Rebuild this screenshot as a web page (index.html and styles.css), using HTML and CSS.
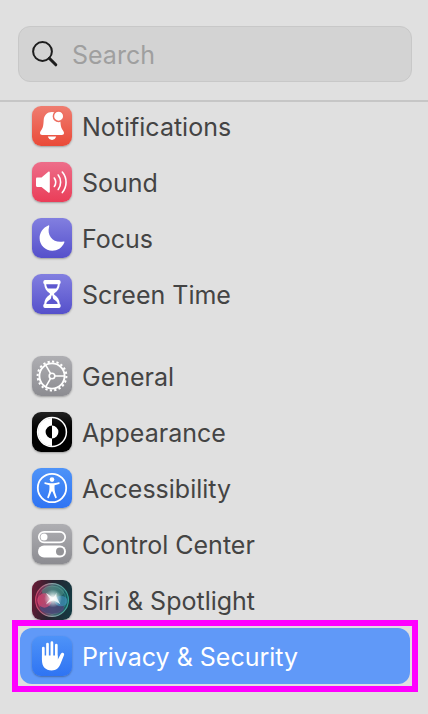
FILE: index.html
```html
<!DOCTYPE html>
<html lang="en">
<head>
<meta charset="utf-8">
<meta name="viewport" content="width=device-width, initial-scale=1">
<title>System Settings</title>
<link rel="stylesheet" href="styles.css">
</head>
<body>
<header class="header">
  <label class="search">
    <svg class="search-icon" viewBox="0 0 26 26" aria-hidden="true"><circle cx="10.5" cy="10.5" r="9.4"/><path class="handle" d="M17.3 17.3 23.8 23.8"/></svg>
    <input class="search-input" type="search" placeholder="Search" aria-label="Search">
  </label>
</header>
<nav class="sidebar" aria-label="Settings">
  <ul class="group">
    <li><a class="item" href="#"><span class="icon red">
      <svg viewBox="0 0 40 40"><path fill="#fff" d="M20 5.900c5 0 7.900 3.400 8.300 8 .3 4.200.4 6.900 1.700 9 .8 1.300 2 2.400 2 4.100 0 1.200-.8 1.900-2.200 1.900H10.200C8.800 28.900 8 28.200 8 27c0-1.700 1.200-2.800 2-4.100 1.300-2.100 1.400-4.800 1.700-9 .4-4.600 3.300-8 8.300-8z"/><circle cx="26.600" cy="10.200" r="5.200" fill="#fff" stroke="#ed6e60" stroke-width="1.500"/><path fill="#fff" d="M15.800 30.600h8.400c-.6 2-2.100 3.300-4.200 3.300s-3.600-1.300-4.200-3.300z"/></svg>
    </span><span class="label">Notifications</span></a></li>
    <li><a class="item" href="#"><span class="icon pink">
      <svg viewBox="0 0 40 40"><path fill="#fff" d="M5 15.500h4.500l6.800-5.800c.7-.6 1.500-.3 1.500.7v19.300c0 1-.8 1.300-1.500.7L9.500 25H5.500c-1 0-1.500-.6-1.500-1.500v-6.500c0-.9.3-1.500 1-1.500z"/><path class="line" stroke-width="1.600" d="M22.300 16c1.700 2.500 1.700 6 0 8.500M26.200 13c3.200 4.100 3.200 10.300 0 14.500M30.300 10c5 5.900 5 14.600 0 20.600"/></svg>
    </span><span class="label">Sound</span></a></li>
    <li><a class="item" href="#"><span class="icon purple">
      <svg viewBox="0 0 40 40"><path fill="#fff" d="M16.300 7.400c.6-.3 1.100.1.900.8-2.900 9.700 4.600 17.400 14.300 15.300.8-.2 1.200.3.800 1C30 30 25.500 32.700 20.300 32.700 13.300 32.700 7.600 27.300 7.600 20c0-5.400 3.500-10.600 8.700-12.600z"/></svg>
    </span><span class="label">Focus</span></a></li>
    <li><a class="item" href="#"><span class="icon purple">
      <svg viewBox="0 0 40 40"><path fill="#fff" d="M13 6h14c2 0 2.200 3.700.8 4.100-.3 4.500-2.200 7-5.400 9.100-.5.400-.5 1.200 0 1.600 3.200 2.100 5.100 4.800 5.400 9.200 1.400.4 1.200 4-.8 4H13c-2 0-2.200-3.600-.8-4 .3-4.400 2.200-7.100 5.400-9.200.5-.4.5-1.200 0-1.600-3.200-2.100-5.100-4.600-5.400-9.100C10.800 9.700 11 6 13 6z"/><path fill="#5d58cf" d="M14.200 10.200h11.600c-.2 1.700-.7 3-1.600 4.200h-8.400c-.9-1.200-1.400-2.500-1.600-4.200zM19.500 21.500h1l.4 2.400c.2.900.7 1.300 1.500 1.900 1.800 1.300 3 2.200 3.300 4.100H14.300c.3-1.900 1.500-2.800 3.300-4.100.8-.6 1.300-1 1.500-1.900z"/></svg>
    </span><span class="label">Screen Time</span></a></li>
  </ul>
  <ul class="group">
    <li><a class="item" href="#"><span class="icon gray">
      <svg viewBox="0 0 40 40"><g class="line"><circle cx="20" cy="20" r="12.600" stroke-width="1.900"/><circle cx="20" cy="20" r="2.800" stroke-width="1.600"/><path stroke-width="1.600" d="M23 20h9.500M18.500 17.400 13.700 9.100M18.500 22.600l-4.800 8.300"/><circle class="teeth" cx="20" cy="20" r="14.400" pathLength="40"/></g></svg>
    </span><span class="label">General</span></a></li>
    <li><a class="item" href="#"><span class="icon black">
      <svg viewBox="0 0 40 40"><circle cx="20" cy="20" r="14.400" fill="none" stroke="#fff" stroke-width="1.500"/><path fill="#fff" d="M20 6a14 14 0 0 0 0 28v-7.600a6.400 6.400 0 0 1 0-12.800zM20 13.600a6.400 6.400 0 0 1 0 12.800z"/></svg>
    </span><span class="label">Appearance</span></a></li>
    <li><a class="item" href="#"><span class="icon blue">
      <svg viewBox="0 0 40 40"><circle class="line" cx="20" cy="20" r="14.200" stroke-width="1.800"/><circle cx="20" cy="11.600" r="2.300" fill="#fff"/><path fill="#fff" d="M13.300 14.300c2.300.8 4.400 1 6.700 1s4.400-.2 6.700-1c1.100-.3 1.400 1.200.4 1.600l-4.500 1.400c-.3 3.400.1 6.100 1.200 9.300l.9 2.500c.4 1.100-1.100 1.700-1.600.6L20.500 23.500h-1L16.900 29.700c-.5 1.100-2 .5-1.600-.6l.9-2.500c1.100-3.200 1.500-5.900 1.200-9.300l-4.500-1.400c-1-.4-.7-1.900.4-1.600z"/></svg>
    </span><span class="label">Accessibility</span></a></li>
    <li><a class="item" href="#"><span class="icon gray">
      <svg viewBox="0 0 40 40"><rect class="line" x="6.800" y="7.800" width="26.400" height="10.600" rx="5.300" stroke-width="1.700"/><circle cx="12" cy="13.100" r="3.500" fill="#fff"/><rect x="6" y="21.500" width="28" height="12" rx="6" fill="#fff"/><circle cx="28" cy="27.500" r="4" fill="#949498"/></svg>
    </span><span class="label">Control Center</span></a></li>
    <li><a class="item" href="#"><span class="icon siri">
      <svg viewBox="0 0 40 40"><defs><radialGradient id="glow"><stop offset="0" stop-color="#fff"/><stop offset=".3" stop-color="#fff" stop-opacity=".75"/><stop offset="1" stop-color="#dff" stop-opacity="0"/></radialGradient><linearGradient id="ring"><stop offset="0" stop-color="#c84466"/><stop offset=".5" stop-color="#8da0a5"/><stop offset="1" stop-color="#37a49b"/></linearGradient><linearGradient id="orb"><stop offset="0" stop-color="#8b1747"/><stop offset=".5" stop-color="#4a6470"/><stop offset="1" stop-color="#105c60"/></linearGradient></defs><circle cx="20" cy="20" r="16.400" fill="url(#orb)" stroke="url(#ring)" stroke-width="1.200"/><circle cx="20" cy="20" r="14" fill="none" stroke="url(#ring)" stroke-width=".8" opacity=".7"/><ellipse cx="21" cy="12" rx="11" ry="6.500" fill="#4d9488" opacity=".5"/><ellipse cx="20" cy="28" rx="12" ry="6" fill="#4a4577" opacity=".8"/><circle cx="12.500" cy="20.500" r="7.200" fill="#d94a75" opacity=".7"/><ellipse cx="29" cy="21" rx="6.500" ry="5.200" fill="#3f8fb8" opacity=".7"/><path fill="#fff" opacity=".8" d="M14 13c3 2 5 3 6.500 4.500 2-1 3-2.500 4-5-.3 3-.2 4.500 1 6.500l3 5.500c-3-2-5-3.500-7-4-3 .5-4.500 1.500-7.500 4 1.500-3 3-4 4-5.500-1-2-2.500-3.500-4-6z"/><circle cx="21" cy="18.500" r="9" fill="url(#glow)"/></svg>
    </span><span class="label">Siri &amp; Spotlight</span></a></li>
    <li><a class="item selected" href="#" aria-current="page"><span class="icon blue">
      <svg viewBox="0 0 40 40"><g fill="none" stroke="#fff" stroke-linecap="round" stroke-width="2.700"><path d="M11.300 12V24M15.500 8.100v14M19.900 6.700V22M24.300 9.200v14"/></g><path fill="#fff" d="M9.950 19.500h15.700v4.200l2.700-5c.8-1.500 1.600-2 2.700-1.800 1.300.3 1.300 1.400.8 2.700l-3.300 8.200c-1.600 4.300-4.400 6.600-8.900 6.600-6.200 0-9.700-3.800-9.700-10.400z"/></svg>
    </span><span class="label">Privacy &amp; Security</span></a></li>
  </ul>
</nav>
</body>
</html>
```

FILE: styles.css
```css
* {
  box-sizing: border-box;
}

body {
  margin: 0;
  background: #e0e0e0;
  color: #444;
  font: 25px/32px Inter, "Liberation Sans", sans-serif;
}

.header {
  padding: 26px 16px 18px 18px;
  border-bottom: 2px solid #c6c6c6;
}

.search {
  display: flex;
  align-items: center;
  gap: 14px;
  height: 56px;
  padding: 0 13px;
  border: 1px solid #c8c8c8;
  border-radius: 12px;
  background: #d3d3d3;
}

.search-icon {
  flex: none;
  width: 26px;
  height: 26px;
  fill: none;
  stroke: #1d1d1d;
  stroke-width: 2;
  stroke-linecap: round;
}

.handle {
  stroke-width: 3;
}

.search-input {
  flex: 1;
  min-width: 0;
  padding: 2px 0 0;
  border: 0;
  outline: 0;
  background: none;
  color: #444;
  font: inherit;
  appearance: none;
}

.search-input::placeholder {
  color: #9f9f9f;
  opacity: 1;
}

/* The list is scrolled slightly under the header. */
.sidebar {
  display: grid;
  gap: 26px;
  margin-top: -4px;
  padding: 0 18px 30px 20px;
}

.group {
  margin: 0;
  padding: 0;
  list-style: none;
}

.item {
  position: relative;
  display: flex;
  align-items: center;
  gap: 10px;
  height: 56px;
  padding: 0 12px;
  border-radius: 12px;
  color: inherit;
  text-decoration: none;
  white-space: nowrap;
}

.label {
  padding-top: 2px;
}

.selected {
  background: #6099f8;
  color: #fff;
}

.selected::after {
  content: "";
  position: absolute;
  inset: -8px;
  border: 6px solid #f0f;
  pointer-events: none;
}

.icon {
  flex: none;
  width: 40px;
  height: 40px;
  border-radius: 9px;
  box-shadow: 0 1px 2px rgb(0 0 0 / 30%);
}

.icon svg {
  display: block;
  width: 100%;
  height: 100%;
}

.line {
  fill: none;
  stroke: #fff;
  stroke-linecap: round;
}

.teeth {
  stroke-width: 2;
  stroke-linecap: butt;
  stroke-dasharray: 1 1;
}

.red {
  background: linear-gradient(#ef7d70, #ea4a38);
}

.pink {
  background: linear-gradient(#ed6e8a, #ea3d58);
}

.purple {
  background: linear-gradient(#827fe0, #5550cb);
}

.gray {
  background: linear-gradient(#aeaeb2, #8c8c91);
}

.black {
  background: linear-gradient(#222, #000 40%);
}

.blue {
  background: linear-gradient(#4e93f8, #2f74f3);
}

.siri {
  background: linear-gradient(100deg, #6d1a35, #272330 45%, #123c43);
}
```
